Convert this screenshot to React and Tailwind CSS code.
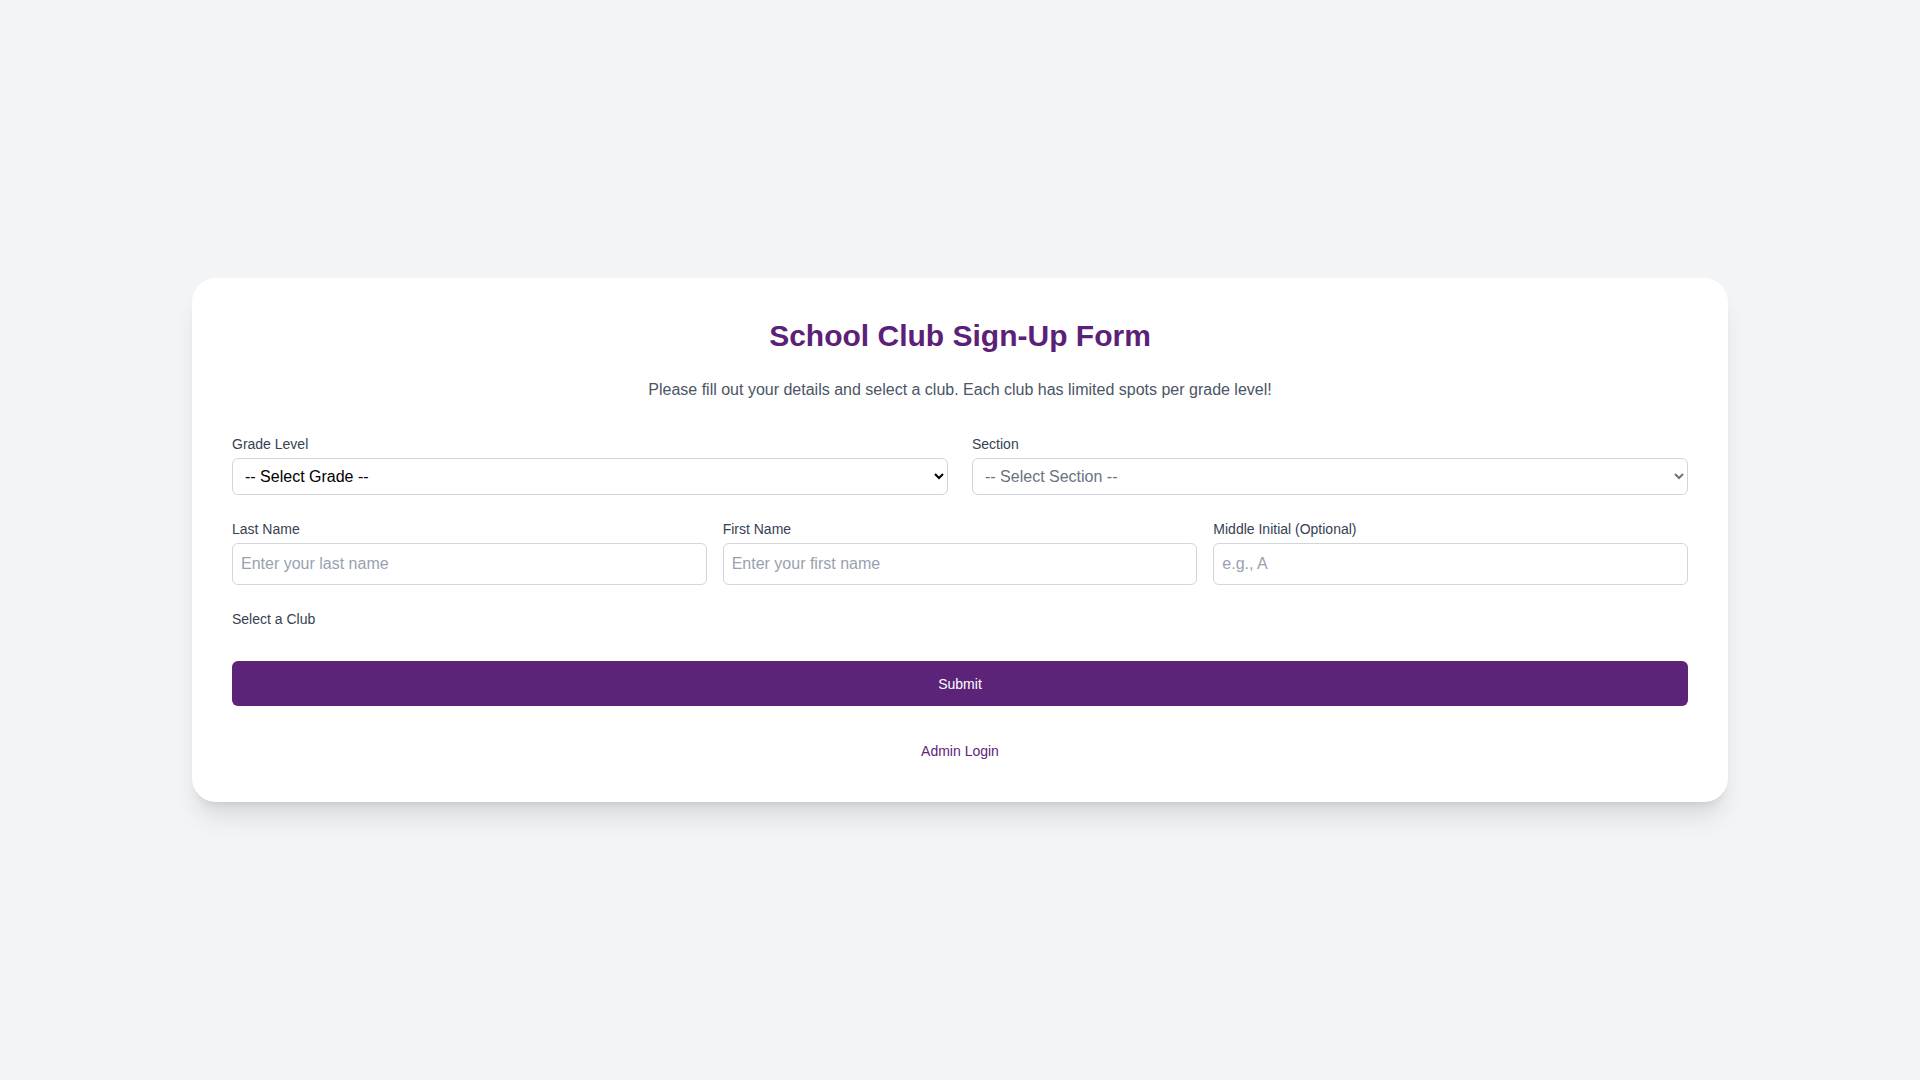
import React, { useState } from "react";

const grades = ["Grade 7", "Grade 8", "Grade 9", "Grade 10"];

const App = () => {
  const [grade, setGrade] = useState("");
  const [section, setSection] = useState("");

  return (
    <div
      className="min-h-screen bg-gray-100 flex items-center justify-center"
      style={{ fontFamily: '"Liberation Sans", Arial, sans-serif' }}
    >
      <div className="w-[1536px] bg-white rounded-3xl shadow-xl px-10 pt-10 pb-[39px]">
        {/* Header */}
        <h1 className="text-3xl font-bold text-center text-[#5b2178] mb-6">
          School Club Sign-Up Form
        </h1>
        <p className="text-base text-center text-gray-600 mb-8">
          Please fill out your details and select a club. Each club has limited spots per grade level!
        </p>

        {/* Grade & Section */}
        <div className="grid grid-cols-2 gap-6 mb-6">
          <div>
            <label className="block text-sm text-gray-700 mb-1">Grade Level</label>
            <select
              value={grade}
              onChange={(e) => setGrade(e.target.value)}
              className="w-full border border-gray-300 rounded-md px-2 py-2 text-base bg-white text-black"
            >
              <option value="">-- Select Grade --</option>
              {grades.map((g) => (
                <option key={g} value={g}>{g}</option>
              ))}
            </select>
          </div>
          <div>
            <label className="block text-sm text-gray-700 mb-1">Section</label>
            <select
              value={section}
              disabled={!grade}
              onChange={(e) => setSection(e.target.value)}
              className="w-full border border-gray-300 rounded-md px-2 py-2 text-base bg-white text-gray-500"
            >
              <option value="">-- Select Section --</option>
            </select>
          </div>
        </div>

        {/* Names */}
        <div className="grid grid-cols-3 gap-4 mb-6">
          <div>
            <label className="block text-sm text-gray-700 mb-1">Last Name</label>
            <input
              type="text"
              placeholder="Enter your last name"
              className="w-full border border-gray-300 rounded-md px-2 py-2 text-base placeholder-gray-400"
            />
          </div>
          <div>
            <label className="block text-sm text-gray-700 mb-1">First Name</label>
            <input
              type="text"
              placeholder="Enter your first name"
              className="w-full border border-gray-300 rounded-md px-2 py-2 text-base placeholder-gray-400"
            />
          </div>
          <div>
            <label className="block text-sm text-gray-700 mb-1">Middle Initial (Optional)</label>
            <input
              type="text"
              placeholder="e.g., A"
              maxLength={1}
              className="w-full border border-gray-300 rounded-md px-2 py-2 text-base placeholder-gray-400"
            />
          </div>
        </div>

        {/* Clubs */}
        <div className="mb-7">
          <label className="block text-sm text-gray-700 mb-1">Select a Club</label>
          <div className="grid grid-cols-3 gap-4"></div>
        </div>

        <button className="w-full h-[45px] bg-[#5c2479] text-white text-sm rounded-md">
          Submit
        </button>

        <div className="mt-[33px] text-center">
          <a href="#" className="text-sm text-[#5c2479]">Admin Login</a>
        </div>
      </div>
    </div>
  );
};

export default App;
